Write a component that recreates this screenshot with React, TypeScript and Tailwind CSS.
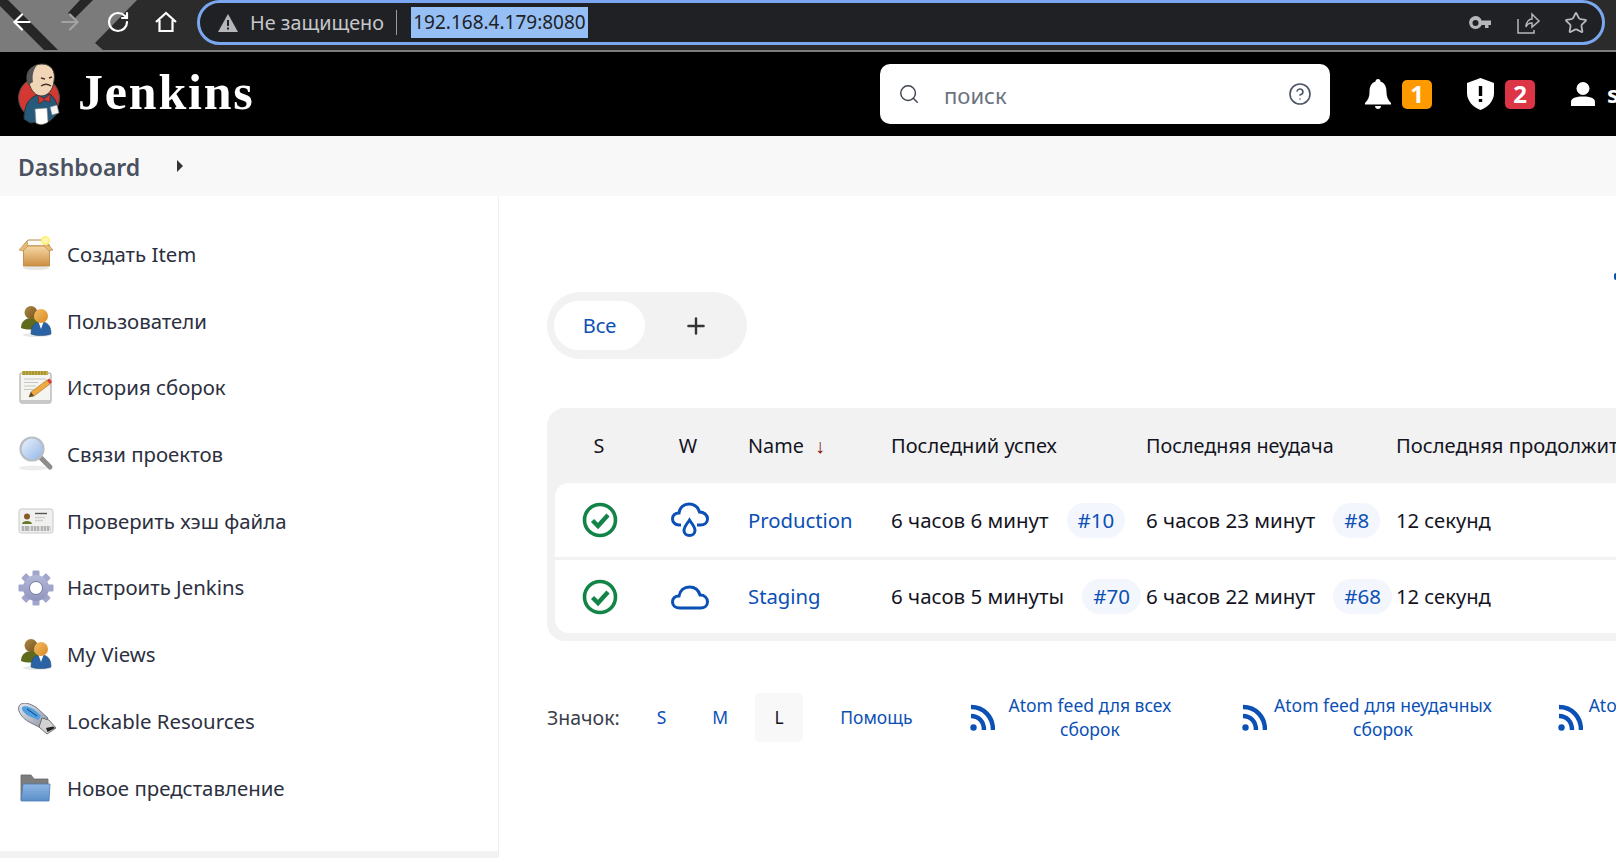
import React from "react"
import { ArrowLeft, ArrowRight, RotateCw, Star, Search, CircleHelp, Plus } from "lucide-react"

const sans = "font-['Noto_Sans','Open_Sans',sans-serif]"

const JenkinsLogo = () => (
  <svg width="44" height="66" viewBox="18 60 44 66" className="shrink-0">
    <circle cx="39" cy="97" r="20.5" fill="#d33833" stroke="#4a4a4a" strokeWidth="1" />
    <path d="M24 118 C24 104 29 97 37 94 L50 93 C56 98 58 104 58 112 L50 120 L30 122 Z" fill="#265a7a" stroke="#333" strokeWidth="1" />
    <path d="M29 82 C26 70 33 63 42 63 C51 63 56 70 54 80 C53 89 48 95 41 95 C36 95 31 90 29 82 Z" fill="#f0d6b7" stroke="#3a3a3a" strokeWidth="1" />
    <path d="M28 84 C24 74 28 66 37 64 C33 69 32 75 33 81 Z" fill="#555" />
    <path d="M41 85 C44 83 48 83 51 85 M41 77 L45 78 M49 77 L52 76" stroke="#49332a" strokeWidth="1.4" fill="none" />
    <path d="M38 94 L44 98 L50 93 L50 101 L44 99 L39 103 Z" fill="#d33833" stroke="#6a1512" strokeWidth="0.6" />
    <path d="M35 108 L47 107 L48 121 C44 124 39 124 36 122 Z" fill="#fff" stroke="#888" strokeWidth="0.6" />
    <path d="M50 106 L57 104 L59 112 L52 114 Z" fill="#f4f4f4" stroke="#777" strokeWidth="0.6" />
  </svg>
)

const Defs = () => (
  <svg width="0" height="0" className="absolute">
    <defs>
      <linearGradient id="box" x1="0" y1="0" x2="0" y2="1">
        <stop offset="0" stopColor="#f6d7a4" />
        <stop offset="1" stopColor="#cc8f43" />
      </linearGradient>
      <linearGradient id="head" x1="0" y1="0" x2="1" y2="1">
        <stop offset="0" stopColor="#f4bd63" />
        <stop offset="1" stopColor="#d98a24" />
      </linearGradient>
      <linearGradient id="headb" x1="0" y1="0" x2="1" y2="1">
        <stop offset="0" stopColor="#b08a45" />
        <stop offset="1" stopColor="#73521d" />
      </linearGradient>
      <linearGradient id="lens" x1="0" y1="0" x2="1" y2="1">
        <stop offset="0" stopColor="#eef4fc" />
        <stop offset="1" stopColor="#8fb4e6" />
      </linearGradient>
      <linearGradient id="gear" x1="0" y1="0" x2="0" y2="1">
        <stop offset="0" stopColor="#b4b8d8" />
        <stop offset="1" stopColor="#8f94bd" />
      </linearGradient>
      <linearGradient id="folder" x1="0" y1="0" x2="0" y2="1">
        <stop offset="0" stopColor="#8fb6e2" />
        <stop offset="1" stopColor="#5a8ec8" />
      </linearGradient>
      <linearGradient id="usb" x1="0" y1="0" x2="1" y2="1">
        <stop offset="0" stopColor="#e6e8ee" />
        <stop offset="1" stopColor="#8d93a3" />
      </linearGradient>
    </defs>
  </svg>
)

const BoxIcon = () => (
  <svg width="36" height="36" viewBox="0 0 36 36">
    <ellipse cx="18" cy="32" rx="13" ry="2" fill="#e6e6e6" />
    <path d="M5 10 L10 4 L27 4 L32 10 Z" fill="#fbfaf3" stroke="#b5884a" strokeWidth="1" />
    <rect x="5.5" y="10" width="26" height="20" fill="url(#box)" stroke="#b98439" strokeWidth="0.8" />
    <path d="M1 14 L9 5 L10 10 L5 15 Z M35 14 L27 5 L26 10 L31 15 Z" fill="#e4b875" stroke="#b5884a" strokeWidth="0.6" />
    <circle cx="27.5" cy="4.5" r="4.5" fill="#fff27a" />
    <circle cx="27.5" cy="4.5" r="2.4" fill="#fff6bf" />
  </svg>
)

const UsersIcon = () => (
  <svg width="36" height="36" viewBox="0 0 36 36">
    <ellipse cx="19" cy="32" rx="14" ry="2" fill="#e8e8e8" />
    <path d="M3 25 C3 18 8 15 14 15 C20 15 24 18 24 25 C18 27 8 27 3 25 Z" fill="#5e6b1c" />
    <circle cx="13" cy="9.5" r="6.5" fill="url(#headb)" />
    <path d="M13 31 C13 22 17 19 23 19 C29 19 33 22 33 31 C27 33 18 33 13 31 Z" fill="#2b62a3" stroke="#204c80" strokeWidth="0.6" />
    <path d="M20.5 19 L23 26 L25.5 19 Z" fill="#fff" />
    <circle cx="23" cy="13" r="7" fill="url(#head)" />
  </svg>
)

const NotesIcon = () => (
  <svg width="36" height="36" viewBox="0 0 36 36">
    <rect x="2" y="3" width="31" height="30" rx="1.5" fill="#f4f4f1" stroke="#9a9a9a" strokeWidth="1" />
    <rect x="2.5" y="30" width="30" height="3" fill="#c8c8c8" />
    <rect x="4" y="1" width="26" height="4" fill="#c4b04a" />
    <path d="M6 1v4M9 1v4M12 1v4M15 1v4M18 1v4M21 1v4M24 1v4M27 1v4" stroke="#7d6f20" strokeWidth="0.8" />
    <path d="M6 9h22M6 12.5h14M6 16h12M6 19.5h10" stroke="#c6c6c6" strokeWidth="1.2" />
    <path d="M11 27 L13 22 L29 10 L32 14 L16 26 Z" fill="#eea93f" stroke="#a86f1d" strokeWidth="0.6" />
    <path d="M11 27 L13 22 L16 26 Z" fill="#5b4a31" />
    <path d="M29 10 L32 14 L34 12 L31.5 8.5 Z" fill="#d9362e" />
  </svg>
)

const LensIcon = () => (
  <svg width="36" height="36" viewBox="0 0 36 36">
    <ellipse cx="15" cy="32" rx="14" ry="2.5" fill="#ececec" />
    <path d="M23 22 L32 31" stroke="#8d8d8d" strokeWidth="5" strokeLinecap="round" />
    <circle cx="14" cy="13" r="11.5" fill="url(#lens)" stroke="#b9bdc4" strokeWidth="2.2" />
  </svg>
)

const CardIcon = () => (
  <svg width="36" height="36" viewBox="0 0 36 36">
    <rect x="1" y="6" width="34" height="24" rx="2.5" fill="#f0f0ee" stroke="#c9c9c9" strokeWidth="1" />
    <circle cx="9" cy="13.5" r="3" fill="#8b5b26" />
    <path d="M4 21 C4 17 14 17 14 21 Z" fill="#66792a" />
    <path d="M17 10.5h12" stroke="#555" strokeWidth="1.4" />
    <path d="M17 14.5h10M17 17.5h8" stroke="#cfcfcf" strokeWidth="1.4" />
    <rect x="3" y="23" width="30" height="5" fill="#dadada" />
    <path d="M5 23v5M8 23v5M10 23v5M14 23v5M17 23v5M20 23v5M24 23v5M27 23v5M30 23v5" stroke="#8a8a8a" strokeWidth="1" />
  </svg>
)

const GearIcon = () => (
  <svg width="36" height="36" viewBox="0 0 36 36">
    {[0, 45, 90, 135, 180, 225, 270, 315].map((a) => (
      <rect key={a} x="14.5" y="0.5" width="7" height="8" rx="1" fill="#a0a5cb" transform={`rotate(${a} 18 18)`} />
    ))}
    <circle cx="18" cy="18" r="13" fill="url(#gear)" />
    <circle cx="18" cy="18" r="6.5" fill="#fff" stroke="#74799f" strokeWidth="1" />
  </svg>
)

const UsbIcon = () => (
  <svg width="38" height="36" viewBox="0 0 38 36">
    <path d="M1 3 C4 -2 12 0 19 5 L30 15 L23 25 L11 19 C4 15 -1 8 1 3 Z" fill="url(#usb)" stroke="#5c6272" strokeWidth="0.8" />
    <path d="M4 4 C7 2 13 4 18 8 L23 13 L20 17 L11 13 C7 11 3 7 4 4 Z" fill="#4c9fe0" />
    <path d="M9 6 L19 13" stroke="#123b6b" strokeWidth="1" />
    <path d="M24 15 L31 17 L38 25 L29 31 L21 24 Z" fill="#d2d2d2" stroke="#555" strokeWidth="0.8" />
    <path d="M28 25 L35 23.5 L37 25 L29.5 29 Z" fill="#222" />
  </svg>
)

const FolderIcon = () => (
  <svg width="36" height="36" viewBox="0 0 36 36">
    <path d="M3 5 L13 5 L16 9 L30 9 L30 16 L3 30 Z" fill="#7d7d7d" stroke="#666" strokeWidth="0.8" />
    <path d="M5 14 L32 14 L31 31 L3 31 Z" fill="url(#folder)" stroke="#4b7cb5" strokeWidth="0.8" />
  </svg>
)

const menu: [string, React.ReactNode][] = [
  ["Создать Item", <BoxIcon />],
  ["Пользователи", <UsersIcon />],
  ["История сборок", <NotesIcon />],
  ["Связи проектов", <LensIcon />],
  ["Проверить хэш файла", <CardIcon />],
  ["Настроить Jenkins", <GearIcon />],
  ["My Views", <UsersIcon />],
  ["Lockable Resources", <UsbIcon />],
  ["Новое представление", <FolderIcon />],
]

const SuccessIcon = () => (
  <svg width="36" height="36" viewBox="0 0 36 36">
    <circle cx="18" cy="18" r="15.5" fill="none" stroke="#138347" strokeWidth="3.6" />
    <path d="M10.5 18.5 L16 24 L26 13" fill="none" stroke="#138347" strokeWidth="4.4" />
  </svg>
)

const RainIcon = () => (
  <svg width="38" height="36" viewBox="0 0 38 36" fill="none" stroke="#0b50b5" strokeWidth="3">
    <path d="M10 23 H8 C4 23 1.5 20 1.5 17 C1.5 13.5 4 11 8 11 C8.5 5.5 13 2 18 2 C23 2 27 5 28.5 10 C33 10 36.5 13 36.5 17 C36.5 20.5 33.5 23 29.5 23 H26" />
    <path d="M18.5 18 C15.5 22.5 13 25 13 28.5 C13 31.5 15.5 33.5 18.5 33.5 C21.5 33.5 24 31.5 24 28.5 C24 25 21.5 22.5 18.5 18 Z" />
  </svg>
)

const CloudIcon = () => (
  <svg width="38" height="36" viewBox="0 0 38 36" fill="none" stroke="#0b50b5" strokeWidth="3">
    <path d="M9 29 C4.5 29 1.5 26.5 1.5 23 C1.5 19.5 4 17 8 17 C9 11.5 13 8 18.5 8 C23.5 8 27.5 11 29 16 C33.5 16 36.5 19 36.5 23 C36.5 26.5 33.5 29 29.5 29 Z" />
  </svg>
)

const RssIcon = () => (
  <svg width="26" height="28" viewBox="0 0 26 28" className="shrink-0" fill="none" stroke="#0b50b5" strokeWidth="4.4">
    <circle cx="4.5" cy="23.5" r="3.2" fill="#0b50b5" stroke="none" />
    <path d="M2 12 C9.5 12 15 17.5 15 26" />
    <path d="M2 3 C15 3 24 13 24 26" />
  </svg>
)

const cols = "grid grid-cols-[88px_90px_143px_255px_250px_1fr] items-center"

const BuildPill = ({ label }: { label: string }) => (
  <span className="ml-[18px] flex h-[35px] items-center rounded-full bg-[#f3f6fc] px-[11px] text-[#0b50b5]">{label}</span>
)

const Row = ({ icon, name, ok, okId, fail, failId, rowClass }: { icon: React.ReactNode; name: string; ok: string; okId: string; fail: string; failId: string; rowClass: string }) => (
  <div className={`${cols} bg-white text-[20.5px] text-[#14141f] ${rowClass}`}>
    <div className="flex justify-center pl-[2px]"><SuccessIcon /></div>
    <div className="flex justify-center pl-[4px]">{icon}</div>
    <div className="pl-[15px] text-[20.3px] text-[#0b50b5]">{name}</div>
    <div className="flex items-center whitespace-nowrap pl-[15px]">{ok}<BuildPill label={okId} /></div>
    <div className="flex items-center whitespace-nowrap pl-[15px]">{fail}<BuildPill label={failId} /></div>
    <div className="pl-[15px] text-[20.2px]">12 секунд</div>
  </div>
)

const FeedLink = ({ line1, className, textClass }: { line1: string; className: string; textClass: string }) => (
  <div className={`flex shrink-0 items-center text-[#0b50b5] ${className}`}>
    <RssIcon />
    <div className={`-mt-[2px] shrink-0 text-center leading-[24px] ${textClass}`}>
      <div className="whitespace-nowrap">{line1}</div>
      <div>сборок</div>
    </div>
  </div>
)

export default function App() {
  return (
    <div className={`relative flex h-[858px] w-[1616px] flex-col overflow-hidden bg-white ${sans}`}>
      <Defs />
      {/* browser toolbar */}
      <div className="relative flex h-[52px] shrink-0 items-start border-b-2 border-[#7c7c7c] bg-[#2b2b2b]">
        <svg width="210" height="50" viewBox="0 0 210 50" className="absolute left-0 top-0">
          <path d="M0 0 H137 L95 43 L103 50 H0 Z" fill="#7b7b7b" />
          <path d="M-6 0 H8 L58 50 H44 Z" fill="#262626" />
          <path d="M80 0 H93 L74 19 L68 13 Z" fill="#262626" />
        </svg>
        <div className="relative flex h-[46px] w-[197px] items-center pb-[2px] text-white">
          <ArrowLeft size={26} strokeWidth={2} className="ml-[9px]" />
          <ArrowRight size={26} strokeWidth={2} className="ml-[22px] text-[#a3a3a3]" />
          <RotateCw size={24} strokeWidth={2.2} className="ml-[23px]" />
          <svg width="24" height="24" viewBox="0 0 24 24" fill="none" stroke="white" strokeWidth="2.2" className="ml-[24px]">
            <path d="M2 12 L12 3 L22 12 M5.5 10 V21 H18.5 V10" />
          </svg>
        </div>
        <div className="relative flex h-[45px] w-[1408px] items-center rounded-full border-[3px] border-[#7aa7f0] bg-[#202124] text-[20px] text-[#c5c7cb]">
          <svg width="20" height="18" viewBox="0 0 20 18" className="ml-[18px] shrink-0">
            <path d="M10 0 L20 18 H0 Z" fill="#b5b7ba" />
            <path d="M10 6v6M10 13.5v2" stroke="#202124" strokeWidth="2" />
          </svg>
          <span className="ml-[12px] text-[19.8px]">Не защищено</span>
          <span className="ml-[12px] h-[25px] w-px bg-[#9a9a9a]" />
          <span className="ml-[14px] flex h-[31px] w-[177px] items-center justify-center whitespace-nowrap bg-[#96c0f5] text-[19px] text-[#202124]">192.168.4.179:8080</span>
          <svg width="22" height="14" viewBox="0 0 22 14" className="ml-[881px] shrink-0" fill="#b5b7ba">
            <path fillRule="evenodd" d="M6.5 0 A6.5 6.5 0 0 1 12.6 4.5 H22 V9 H19.5 V12 H16 V9 H12.6 A6.5 6.5 0 1 1 6.5 0 Z M6.5 4 A3 3 0 1 0 6.5 10 A3 3 0 0 0 6.5 4 Z" />
          </svg>
          <svg width="24" height="24" viewBox="0 0 24 24" fill="none" stroke="#b5b7ba" strokeWidth="1.5" className="ml-[25px] shrink-0">
            <path d="M2 8 V22 H18 V19 M10 16 C10 11 13 8 16 8 V3 L23 10 L16 16 V12 C13 12 11 13 10 16 Z" />
          </svg>
          <Star size={24} strokeWidth={1.8} className="ml-[24px] shrink-0 text-[#b5b7ba]" />
        </div>
      </div>

      {/* jenkins header */}
      <div className="flex h-[84px] shrink-0 items-center bg-black text-white">
        <div className="ml-[18px] flex"><JenkinsLogo /></div>
        <span className="mb-[5px] ml-[16px] w-[176px] shrink-0 font-['Liberation_Serif',serif] text-[50px] font-bold leading-none tracking-[1.8px]">Jenkins</span>
        <div className="ml-[626px] flex h-[60px] w-[450px] shrink-0 items-center rounded-[10px] bg-white text-[#6b7280]">
          <Search size={22} strokeWidth={1.6} className="ml-[18px] text-[#3f4650]" />
          <span className="ml-[24px] mt-[2px] text-[22px]">поиск</span>
          <CircleHelp size={24} strokeWidth={1.6} className="ml-auto mr-[18px] text-[#4b5563]" />
        </div>
        <svg width="26" height="30" viewBox="0 0 26 30" fill="white" className="ml-[35px] shrink-0">
          <path d="M13 0 C14.5 0 15.5 1 15.5 2.5 C20 4 21.5 8 21.5 13 C21.5 18 23 21 26 24 H0 C3 21 4.5 18 4.5 13 C4.5 8 6 4 10.5 2.5 C10.5 1 11.5 0 13 0 Z" />
          <rect x="0" y="24" width="26" height="1.5" />
          <path d="M10 27 H16 C16 29 14.5 30 13 30 C11.5 30 10 29 10 27 Z" />
        </svg>
        <span className="ml-[11px] flex h-[29px] w-[30px] shrink-0 items-center justify-center rounded-[5px] bg-[#fe9a00] text-[24px] font-bold">1</span>
        <svg width="27" height="32" viewBox="0 0 27 32" className="ml-[35px] shrink-0">
          <path d="M13.5 0 L27 5 V15 C27 23 21 29 13.5 32 C6 29 0 23 0 15 V5 Z" fill="white" />
          <path d="M13.5 8 V18 M13.5 21 V24" stroke="black" strokeWidth="3.4" />
        </svg>
        <span className="ml-[11px] flex h-[29px] w-[30px] shrink-0 items-center justify-center rounded-[5px] bg-[#dc3545] text-[24px] font-bold">2</span>
        <svg width="24" height="24" viewBox="0 0 24 24" fill="white" className="ml-[36px] shrink-0">
          <circle cx="12" cy="6.5" r="6.5" />
          <path d="M0 24 V20 C0 16 5 14.5 12 14.5 C19 14.5 24 16 24 20 V24 Z" />
        </svg>
        <span className="ml-[12px] text-[24px] font-bold">s</span>
      </div>

      {/* breadcrumb */}
      <div className="flex h-[60px] shrink-0 items-center bg-[#f8f8f8] pl-[18px] text-[#4a5160]">
        <span className="mt-[3px] text-[23px] font-semibold">Dashboard</span>
        <span className="mb-[1px] ml-[37px] h-0 w-0 border-y-[6px] border-l-[6px] border-y-transparent border-l-[#333]" />
      </div>

      <div className="flex min-h-0 flex-1">
        {/* side panel */}
        <div className="flex w-[499px] shrink-0 flex-col border-r border-[#efefef] pt-[25px]">
          {menu.map(([label, icon]) => (
            <div key={label} className="flex h-[66.7px] items-center pl-[18px] text-[20.4px] text-[#2c3040]">
              <span className="flex w-[49px] shrink-0">{icon}</span>
              {label}
            </div>
          ))}
          <div className="mt-auto h-[7px] bg-[#f2f2f2]" />
        </div>

        {/* main panel */}
        <div className="relative min-w-0 flex-1 pl-[48px] pt-[96px]">
          <span className="absolute right-0 top-[77px] h-[7px] w-[2px] rounded-l-sm bg-[#0b50b5]" />
          <div className="flex h-[67px] w-[200px] items-center rounded-full bg-[#f2f2f2] pl-[7px]">
            <span className="flex h-[49px] w-[91px] items-center justify-center rounded-full bg-white text-[20px] text-[#0b50b5]">Все</span>
            <Plus size={26} strokeWidth={2.2} className="ml-[38px] text-[#333]" />
          </div>

          <div className="mt-[49px] w-[1200px] rounded-[18px] bg-[#f2f2f2] px-[8px] pb-[8px]">
            <div className={`${cols} h-[75px] whitespace-nowrap text-[19.8px] text-[#14141f]`}>
              <div className="text-center">S</div>
              <div className="text-center">W</div>
              <div className="pl-[15px]">Name <span className="ml-[6px] text-[20px] text-[#8f1414]">↓</span></div>
              <div className="pl-[15px] text-[20px]">Последний успех</div>
              <div className="pl-[15px]">Последняя неудача</div>
              <div className="pl-[15px] text-[20.2px]">Последняя продолжительность</div>
            </div>
            <Row icon={<RainIcon />} name="Production" ok="6 часов 6 минут" okId="#10" fail="6 часов 23 минут" failId="#8" rowClass="h-[74px] rounded-t-[14px]" />
            <Row icon={<CloudIcon />} name="Staging" ok="6 часов 5 минуты" okId="#70" fail="6 часов 22 минут" failId="#68" rowClass="mt-[3px] h-[73px] rounded-b-[14px]" />
          </div>

          <div className="mt-[52px] flex h-[49px] items-center whitespace-nowrap text-[17.5px] text-[#0b50b5]">
            <span className="shrink-0 text-[19.5px] text-[#3a3f4b]">Значок:</span>
            <span className="ml-[37px] shrink-0">S</span>
            <span className="ml-[46px] shrink-0">M</span>
            <span className="ml-[27px] flex h-[49px] w-[48px] shrink-0 items-center justify-center rounded-[5px] bg-[#f8f8f8] text-[#14141f]">L</span>
            <span className="ml-[37px] shrink-0">Помощь</span>
            <FeedLink line1="Atom feed для всех" className="ml-[56px]" textClass="pl-[14px] pr-[12px]" />
            <FeedLink line1="Atom feed для неудачных" className="ml-[58px]" textClass="pl-[7px] pr-[12px]" />
            <FeedLink line1="Atom feed для последних" className="ml-[53px]" textClass="pl-[6px]" />
          </div>
        </div>
      </div>
    </div>
  )
}
